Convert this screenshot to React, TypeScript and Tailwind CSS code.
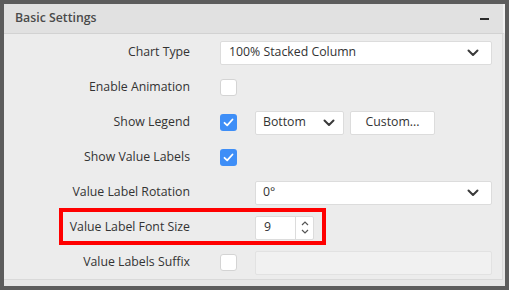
import React from "react";

const font = { fontFamily: '"Open Sans", "Noto Sans", sans-serif' };

function Chevron() {
  return (
    <svg width="12" height="8" viewBox="0 0 12 8" className="shrink-0">
      <path d="M1.5 1.5 L6 6 L10.5 1.5" fill="none" stroke="#3a3a3a" strokeWidth="2" strokeLinecap="round" strokeLinejoin="round" />
    </svg>
  );
}

function Check({ checked }: { checked?: boolean }) {
  return checked ? (
    <div className="w-[17px] h-[17px] rounded-[3px] bg-[#3e8ef7] flex items-center justify-center">
      <svg width="11" height="9" viewBox="0 0 11 9">
        <path d="M1.5 4.8 L4.2 7.3 L9.5 1.5" fill="none" stroke="#fff" strokeWidth="1.8" strokeLinecap="round" strokeLinejoin="round" />
      </svg>
    </div>
  ) : (
    <div className="w-[17px] h-[17px] rounded-[3px] bg-white border border-[#d4d4d4]" />
  );
}

function Row({ label, children }: { label: string; children?: React.ReactNode }) {
  return (
    <div className="h-[35px] flex items-center">
      <div className="w-[186px] text-right text-[12.3px] text-[#333]">{label}</div>
      <div className="ml-[30px] flex items-center">{children}</div>
    </div>
  );
}

export default function App() {
  return (
    <div className="w-[509px] h-[290px] bg-[#5c5c5c] p-[4px]" style={font}>
      <div className="w-[501px] h-[282px] bg-[#e6e6e6] flex flex-col">
        <div className="h-[30px] bg-[#e1e1e1] border-b border-[#d2d2d2] flex items-center justify-between pl-[11px] pr-[14px] border-r-2 border-r-[#f0f0f0]">
          <span className="text-[12.3px] font-semibold text-[#4a4a4a]">Basic Settings</span>
          <div className="w-[9px] h-[2px] bg-[#2a2a2a]" />
        </div>
        <div className="relative w-[499px] h-[246px] pt-[1px] bg-[#ececec] border-r border-b border-[#d9d9d9]">
          <Row label="Chart Type">
            <div className="w-[272px] h-[24px] bg-white border border-[#dcdcdc] rounded-[2px] flex items-center justify-between pl-[8px] pr-[12px] text-[12.3px] text-[#333]">
              <span>100% Stacked Column</span>
              <Chevron />
            </div>
          </Row>
          <Row label="Enable Animation">
            <Check />
          </Row>
          <Row label="Show Legend">
            <Check checked />
            <div className="ml-[18px] w-[89px] h-[24px] bg-white border border-[#dcdcdc] rounded-[2px] flex items-center justify-between pl-[7px] pr-[8px] text-[12.3px] text-[#333]">
              <span>Bottom</span>
              <Chevron />
            </div>
            <div className="ml-[6px] w-[85px] h-[24px] bg-white border border-[#dcdcdc] rounded-[2px] flex items-center justify-center text-[12.3px] text-[#333]">
              Custom...
            </div>
          </Row>
          <Row label="Show Value Labels">
            <Check checked />
          </Row>
          <Row label="Value Label Rotation">
            <div className="ml-[35px] w-[237px] h-[24px] bg-white border border-[#dcdcdc] rounded-[2px] flex items-center justify-between pl-[7px] pr-[12px] text-[12.3px] text-[#333]">
              <span>0°</span>
              <Chevron />
            </div>
          </Row>
          <Row label="Value Label Font Size">
            <div className="ml-[35px] w-[59px] h-[24px] bg-white border border-[#dcdcdc] rounded-[2px] flex items-stretch text-[12.3px] text-[#333]">
              <div className="flex-1 flex items-center pl-[8px]">9</div>
              <div className="w-[18px] border-l border-[#dcdcdc] flex flex-col items-center justify-center gap-[3px]">
                <svg width="8" height="5" viewBox="0 0 8 5">
                  <path d="M1 4 L4 1 L7 4" fill="none" stroke="#555" strokeWidth="1.2" />
                </svg>
                <svg width="8" height="5" viewBox="0 0 8 5">
                  <path d="M1 1 L4 4 L7 1" fill="none" stroke="#555" strokeWidth="1.2" />
                </svg>
              </div>
            </div>
          </Row>
          <Row label="Value Labels Suffix">
            <Check />
            <div className="ml-[18px] w-[237px] h-[24px] bg-[#f1f1f1] border border-[#e2e2e2] rounded-[2px]" />
          </Row>
          <div className="absolute left-[55px] top-[174px] w-[267px] h-[37px] border-4 border-[#ff0000]" />
        </div>
      </div>
    </div>
  );
}
